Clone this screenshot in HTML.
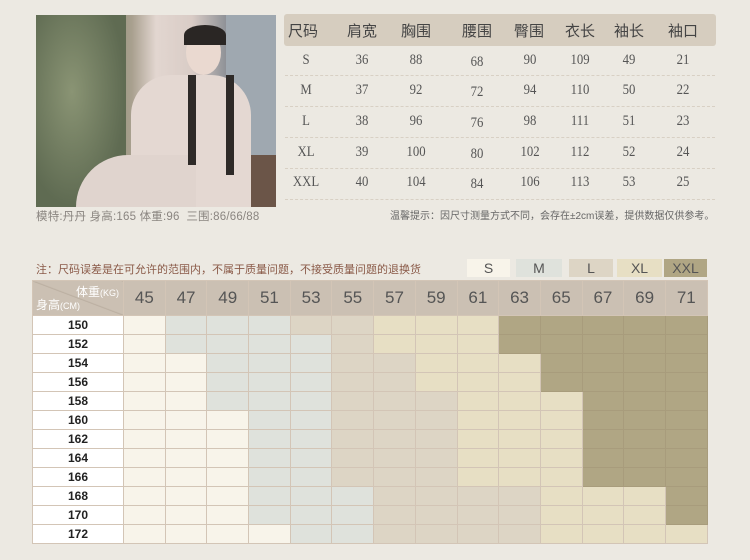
<!DOCTYPE html>
<html><head><meta charset="utf-8">
<style>
*{margin:0;padding:0;box-sizing:border-box}
body{width:750px;height:560px;background:#ece9e2;position:relative;overflow:hidden;font-family:"Liberation Sans","Noto Sans CJK SC",sans-serif}
.abs{position:absolute}
.photo{left:36px;top:15px;width:240px;height:192px;overflow:hidden;background:linear-gradient(90deg,#6e7a5c 0%,#7d8868 25%,#a9a08f 40%,#e2d6d0 50%,#d9ccc6 65%,#8a8e94 80%,#aab3bb 90%,#7a6658 100%)}
.cap{left:36px;top:208px;font-size:11.5px;color:#8a8580;letter-spacing:0.2px}
.band{left:284px;top:14px;width:432px;height:32px;background:#d6cdbf;border-radius:3px}
.th{top:20px;font-size:15px;color:#444;transform:translateX(-50%)}
.td{font-family:"Liberation Serif","Noto Serif CJK SC",serif;font-size:15px;color:#555;transform:translateX(-50%) scaleX(.85)}
.dash{left:285px;width:430px;border-top:1px dashed #d8d0c4;height:0}
.tip{left:390px;top:207px;font-size:10px;color:#666}
.note{left:36px;top:261px;font-size:11px;color:#8a5a48}
.lg{top:259px;height:18px;font-size:14px;color:#555;text-align:center;line-height:18px;font-family:"Liberation Sans Narrow","Liberation Sans",sans-serif}
table{position:absolute;left:32px;top:280px;border-collapse:collapse;table-layout:fixed}
td{border:1px solid #d3c5b6;height:19px;width:41.7px;padding:0;text-align:center;font-size:12px;color:#222}
td.h{background:#fff;width:91px;font-weight:bold;font-size:12px;font-family:"Liberation Sans Narrow","Liberation Sans",sans-serif}
tr.hd td{background:#cbc0b3;height:35px;font-size:17px;color:#555;font-weight:normal;font-family:"Liberation Sans Narrow","Liberation Sans",sans-serif}
.s{background:#f8f4ea}.m{background:#dfe2dc}.l{background:#ddd5c5}.x{background:#e7dfc4}.d{background:#b0a684;border-color:#a89c7c}
</style></head><body>
<div class="abs photo">
<div class="abs" style="left:0;top:0;width:90px;height:192px;background:radial-gradient(ellipse at 40% 40%,#8a9474,#5f6b52 70%)"></div>
<div class="abs" style="left:190px;top:0;width:50px;height:140px;background:#9fa8b0"></div>
<div class="abs" style="left:190px;top:140px;width:50px;height:52px;background:#6b5548"></div>
<div class="abs" style="left:95px;top:60px;width:120px;height:132px;background:#e4d8d2;border-radius:40px 40px 0 0"></div>
<div class="abs" style="left:40px;top:140px;width:120px;height:52px;background:#e0d4ce;border-radius:60px 0 0 0"></div>
<div class="abs" style="left:150px;top:15px;width:35px;height:45px;background:#ead9d0;border-radius:50%"></div>
<div class="abs" style="left:148px;top:10px;width:42px;height:20px;background:#2a2624;border-radius:50% 50% 0 0"></div>
<div class="abs" style="left:152px;top:60px;width:8px;height:90px;background:#2e2a28"></div>
<div class="abs" style="left:190px;top:60px;width:8px;height:100px;background:#2e2a28"></div>
</div>
<div class="abs cap">模特:丹丹 身高:165 体重:96&nbsp; 三围:86/66/88</div>
<div class="abs band"></div>
<div class="abs th" style="left:303px">尺码</div>
<div class="abs th" style="left:362px">肩宽</div>
<div class="abs th" style="left:416px">胸围</div>
<div class="abs th" style="left:477px">腰围</div>
<div class="abs th" style="left:529px">臀围</div>
<div class="abs th" style="left:580px">衣长</div>
<div class="abs th" style="left:629px">袖长</div>
<div class="abs th" style="left:683px">袖口</div>

<div class="abs dash" style="top:75px"></div><div class="abs dash" style="top:106px"></div><div class="abs dash" style="top:137px"></div><div class="abs dash" style="top:168px"></div><div class="abs dash" style="top:199px"></div>

<div class="abs td" style="left:306px;top:52px">S</div><div class="abs td" style="left:362px;top:52px">36</div><div class="abs td" style="left:416px;top:52px">88</div><div class="abs td" style="left:477px;top:54px">68</div><div class="abs td" style="left:530px;top:52px">90</div><div class="abs td" style="left:580px;top:52px">109</div><div class="abs td" style="left:629px;top:52px">49</div><div class="abs td" style="left:683px;top:52px">21</div>
<div class="abs td" style="left:306px;top:82px">M</div><div class="abs td" style="left:362px;top:82px">37</div><div class="abs td" style="left:416px;top:82px">92</div><div class="abs td" style="left:477px;top:84px">72</div><div class="abs td" style="left:530px;top:82px">94</div><div class="abs td" style="left:580px;top:82px">110</div><div class="abs td" style="left:629px;top:82px">50</div><div class="abs td" style="left:683px;top:82px">22</div>
<div class="abs td" style="left:306px;top:113px">L</div><div class="abs td" style="left:362px;top:113px">38</div><div class="abs td" style="left:416px;top:113px">96</div><div class="abs td" style="left:477px;top:115px">76</div><div class="abs td" style="left:530px;top:113px">98</div><div class="abs td" style="left:580px;top:113px">111</div><div class="abs td" style="left:629px;top:113px">51</div><div class="abs td" style="left:683px;top:113px">23</div>
<div class="abs td" style="left:306px;top:144px">XL</div><div class="abs td" style="left:362px;top:144px">39</div><div class="abs td" style="left:416px;top:144px">100</div><div class="abs td" style="left:477px;top:146px">80</div><div class="abs td" style="left:530px;top:144px">102</div><div class="abs td" style="left:580px;top:144px">112</div><div class="abs td" style="left:629px;top:144px">52</div><div class="abs td" style="left:683px;top:144px">24</div>
<div class="abs td" style="left:306px;top:174px">XXL</div><div class="abs td" style="left:362px;top:174px">40</div><div class="abs td" style="left:416px;top:174px">104</div><div class="abs td" style="left:477px;top:176px">84</div><div class="abs td" style="left:530px;top:174px">106</div><div class="abs td" style="left:580px;top:174px">113</div><div class="abs td" style="left:629px;top:174px">53</div><div class="abs td" style="left:683px;top:174px">25</div>

<div class="abs tip">温馨提示：因尺寸测量方式不同，会存在±2cm误差，提供数据仅供参考。</div>

<div class="abs note">注：尺码误差是在可允许的范围内，不属于质量问题，不接受质量问题的退换货</div>
<div class="abs lg s" style="left:467px;width:43px">S</div>
<div class="abs lg m" style="left:516px;width:46px">M</div>
<div class="abs lg l" style="left:569px;width:44px">L</div>
<div class="abs lg x" style="left:617px;width:45px">XL</div>
<div class="abs lg d" style="left:664px;width:43px">XXL</div>

<table>
<tr class="hd"><td class="h" style="background:#cbc0b3;position:relative;background-image:linear-gradient(to top right,transparent 49%,#b9ad9f 50%,transparent 52%)"><span style="position:absolute;right:4px;top:2px;font-size:12px;color:#fff">体重<small style="font-size:9px">(KG)</small></span><span style="position:absolute;left:3px;bottom:2px;font-size:12px;color:#fff">身高<small style="font-size:9px">(CM)</small></span></td><td>45</td><td>47</td><td>49</td><td>51</td><td>53</td><td>55</td><td>57</td><td>59</td><td>61</td><td>63</td><td>65</td><td>67</td><td>69</td><td>71</td></tr>
<tr><td class="h">150</td><td class="s"></td><td class="m"></td><td class="m"></td><td class="m"></td><td class="l"></td><td class="l"></td><td class="x"></td><td class="x"></td><td class="x"></td><td class="d"></td><td class="d"></td><td class="d"></td><td class="d"></td><td class="d"></td></tr>
<tr><td class="h">152</td><td class="s"></td><td class="m"></td><td class="m"></td><td class="m"></td><td class="m"></td><td class="l"></td><td class="x"></td><td class="x"></td><td class="x"></td><td class="d"></td><td class="d"></td><td class="d"></td><td class="d"></td><td class="d"></td></tr>
<tr><td class="h">154</td><td class="s"></td><td class="s"></td><td class="m"></td><td class="m"></td><td class="m"></td><td class="l"></td><td class="l"></td><td class="x"></td><td class="x"></td><td class="x"></td><td class="d"></td><td class="d"></td><td class="d"></td><td class="d"></td></tr>
<tr><td class="h">156</td><td class="s"></td><td class="s"></td><td class="m"></td><td class="m"></td><td class="m"></td><td class="l"></td><td class="l"></td><td class="x"></td><td class="x"></td><td class="x"></td><td class="d"></td><td class="d"></td><td class="d"></td><td class="d"></td></tr>
<tr><td class="h">158</td><td class="s"></td><td class="s"></td><td class="m"></td><td class="m"></td><td class="m"></td><td class="l"></td><td class="l"></td><td class="l"></td><td class="x"></td><td class="x"></td><td class="x"></td><td class="d"></td><td class="d"></td><td class="d"></td></tr>
<tr><td class="h">160</td><td class="s"></td><td class="s"></td><td class="s"></td><td class="m"></td><td class="m"></td><td class="l"></td><td class="l"></td><td class="l"></td><td class="x"></td><td class="x"></td><td class="x"></td><td class="d"></td><td class="d"></td><td class="d"></td></tr>
<tr><td class="h">162</td><td class="s"></td><td class="s"></td><td class="s"></td><td class="m"></td><td class="m"></td><td class="l"></td><td class="l"></td><td class="l"></td><td class="x"></td><td class="x"></td><td class="x"></td><td class="d"></td><td class="d"></td><td class="d"></td></tr>
<tr><td class="h">164</td><td class="s"></td><td class="s"></td><td class="s"></td><td class="m"></td><td class="m"></td><td class="l"></td><td class="l"></td><td class="l"></td><td class="x"></td><td class="x"></td><td class="x"></td><td class="d"></td><td class="d"></td><td class="d"></td></tr>
<tr><td class="h">166</td><td class="s"></td><td class="s"></td><td class="s"></td><td class="m"></td><td class="m"></td><td class="l"></td><td class="l"></td><td class="l"></td><td class="x"></td><td class="x"></td><td class="x"></td><td class="d"></td><td class="d"></td><td class="d"></td></tr>
<tr><td class="h">168</td><td class="s"></td><td class="s"></td><td class="s"></td><td class="m"></td><td class="m"></td><td class="m"></td><td class="l"></td><td class="l"></td><td class="l"></td><td class="l"></td><td class="x"></td><td class="x"></td><td class="x"></td><td class="d"></td></tr>
<tr><td class="h">170</td><td class="s"></td><td class="s"></td><td class="s"></td><td class="m"></td><td class="m"></td><td class="m"></td><td class="l"></td><td class="l"></td><td class="l"></td><td class="l"></td><td class="x"></td><td class="x"></td><td class="x"></td><td class="d"></td></tr>
<tr><td class="h">172</td><td class="s"></td><td class="s"></td><td class="s"></td><td class="s"></td><td class="m"></td><td class="m"></td><td class="l"></td><td class="l"></td><td class="l"></td><td class="l"></td><td class="x"></td><td class="x"></td><td class="x"></td><td class="x"></td></tr>
</table>
</body></html>
